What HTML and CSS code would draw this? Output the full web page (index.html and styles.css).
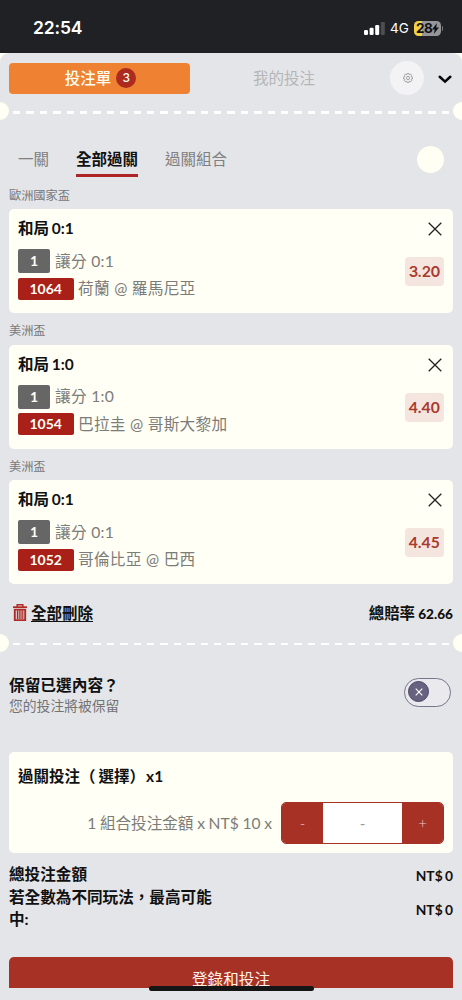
FILE: index.html
```
<!DOCTYPE html>
<html lang="zh-Hant">
<head>
<meta charset="utf-8">
<title>投注單</title>
<link rel="stylesheet" href="styles.css">
</head>
<body>
<div class="phone">
  <div class="status">
    <span class="clock">22:54</span>
    <svg class="signal" width="21" height="13" viewBox="0 0 21 13"><g fill="#fff"><rect x="0" y="8" width="4" height="5" rx="1.2"/><rect x="5.6" y="5.7" width="4" height="7.3" rx="1.2"/><rect x="11.2" y="3" width="4" height="10" rx="1.2"/></g><rect x="16.8" y="0" width="4" height="13" rx="1.2" fill="#4d4e51"/></svg>
    <span class="net">4G</span>
    <span class="battery"><span>28</span><svg width="7" height="11" viewBox="0 0 7 11"><path d="M5 0 0 6.4h2.7L1.8 11 7 4.4H4.2Z" fill="#111"/></svg></span>
    <i class="battery-tip"></i>
  </div>

  <div class="sheet">
    <div class="header">
      <div class="slip">投注單<span class="count">3</span></div>
      <div class="mine">我的投注</div>
      <div class="gear"><svg width="10" height="10" viewBox="0 0 24 24" fill="none" stroke="#98999b" stroke-width="2.2" stroke-linejoin="round"><path d="M9.8 1h4.4l.7 3.2 3-1.6 3 3-1.7 3 3.3 1.2v4.4l-3.3 1.2 1.7 3-3 3-3-1.6-.7 3.2H9.8l-.7-3.2-3 1.6-3-3 1.7-3-3.3-1.2V9.8l3.3-1.2-1.7-3 3-3 3 1.6Z"/><ellipse cx="12" cy="12" rx="3.4" ry="4.4"/></svg></div>
      <svg class="chevron" width="14" height="9" viewBox="0 0 14 9"><path d="m1.7 1.8 5.3 4.8 5.3-4.8" fill="none" stroke="#050505" stroke-width="2.5" stroke-linecap="round"/></svg>
    </div>
    <div class="tear"><i></i><div class="dashes"></div><i></i></div>

    <div class="tabs">
      <span class="tab">一關</span><span class="tab on">全部過關</span><span class="tab">過關組合</span><i class="dot"></i>
    </div>

    <div class="league">歐洲國家盃</div>
    <div class="card">
      <div class="pick">
        <div class="title">和局 0:1</div>
        <div class="row"><span class="tag">1</span><span>讓分 0:1</span></div>
        <div class="row match"><span class="tag red">1064</span><span>荷蘭 @ 羅馬尼亞</span></div>
      </div>
      <div class="side"><svg width="14" height="14" viewBox="0 0 14 14"><path d="m.7.7 12.6 12.6M13.3.7.7 13.3" stroke="#222" stroke-width="1.3"/></svg><span class="odds inter">3.20</span></div>
    </div>
    <div class="league">美洲盃</div>
    <div class="card">
      <div class="pick">
        <div class="title">和局 1:0</div>
        <div class="row"><span class="tag">1</span><span>讓分 1:0</span></div>
        <div class="row match"><span class="tag red">1054</span><span>巴拉圭 @ 哥斯大黎加</span></div>
      </div>
      <div class="side"><svg width="14" height="14" viewBox="0 0 14 14"><path d="m.7.7 12.6 12.6M13.3.7.7 13.3" stroke="#222" stroke-width="1.3"/></svg><span class="odds">4.40</span></div>
    </div>
    <div class="league">美洲盃</div>
    <div class="card">
      <div class="pick">
        <div class="title">和局 0:1</div>
        <div class="row"><span class="tag">1</span><span>讓分 0:1</span></div>
        <div class="row match"><span class="tag red">1052</span><span>哥倫比亞 @ 巴西</span></div>
      </div>
      <div class="side"><svg width="14" height="14" viewBox="0 0 14 14"><path d="m.7.7 12.6 12.6M13.3.7.7 13.3" stroke="#222" stroke-width="1.3"/></svg><span class="odds">4.45</span></div>
    </div>

    <div class="summary">
      <svg width="14" height="17" viewBox="0 0 14 17" fill="none" stroke="#b02a25"><path d="M0 3.2h14" stroke-width="1.8"/><path d="M4.2 3V.8h5.6V3" stroke-width="1.5"/><path d="M1.8 5v11.1h10.4V5" stroke-width="1.9"/><path d="M1.5 5.6h11" stroke-width="1.5"/><path d="M4.4 6v9M6.2 6v9M8 6v9M9.8 6v9" stroke-width="1.2"/></svg>
      <span class="clear">全部刪除</span>
      <span class="total-odds">總賠率 <b>62.66</b></span>
    </div>
    <div class="tear"><i></i><div class="dashes"></div><i></i></div>

    <div class="keep">
      <div>
        <div class="keep-title">保留已選內容？</div>
        <div class="keep-sub">您的投注將被保留</div>
      </div>
      <div class="toggle"><span class="knob"><svg width="8" height="8" viewBox="0 0 8 8"><path d="m.7.7 6.6 6.6M7.3.7.7 7.3" stroke="#fff" stroke-width="1.1"/></svg></span></div>
    </div>

    <div class="stake">
      <div class="stake-title">過關投注<span class="open">（</span>選擇<span class="close">）</span>x1</div>
      <div class="stake-row">
        <span class="formula">1 組合投注金額 x NT$ 10 x</span>
        <div class="stepper"><span class="step">-</span><span class="value">-</span><span class="step">+</span></div>
      </div>
    </div>

    <div class="totals">
      <div class="sum"><span>總投注金額</span><b>NT$ 0</b></div>
      <div class="sum"><span>若全數為不同玩法，最高可能<br>中:</span><b>NT$ 0</b></div>
    </div>
    <div class="submit">登錄和投注</div>
    <div class="home"></div>
  </div>
</div>
</body>
</html>
```

FILE: styles.css
```
* { box-sizing: border-box; }
body { margin: 0; background: #fffff5; font-family: Lato, "Noto Sans CJK TC", sans-serif; color: #111; }
.phone { width: 462px; height: 1000px; overflow: hidden; white-space: nowrap; }
i { display: block; }
svg { display: block; flex: none; }

.status { height: 53px; background: #202125; display: flex; align-items: center; padding: 3px 19px 0 33px; color: #fff; }
.clock { font: 600 17.5px/20px Inter, sans-serif; letter-spacing: -.15px; flex: 1; }
.net { font: 400 13.5px/18px Inter, sans-serif; margin-left: 5px; width: 19px; }
.battery { display: flex; align-items: center; gap: 0; margin-left: 4.5px; width: 27px; height: 15px; padding-left: 2.5px; border-radius: 4.5px; background: linear-gradient(90deg, #f3d246 28%, #96969a 28%); color: #111; font: 700 13.5px/15px Inter, sans-serif; letter-spacing: -.6px; }
.battery-tip { width: 1.5px; height: 5px; margin-left: 1px; border-radius: 0 2px 2px 0; background: #77787b; }

.sheet { height: 947px; background: #e4e5e8; border-radius: 9px 9px 0 0; padding: 0 9px; }
.header { height: 49px; padding-top: 1px; display: flex; align-items: center; }
.slip { width: 181px; height: 31px; border-radius: 4px; background: #ee8132; color: #fffdf0; font-size: 15.5px; line-height: 20px; font-weight: 500; display: flex; align-items: center; justify-content: center; gap: 5px; padding: 0 0 1px 2px; }
.count { width: 20px; height: 20px; margin-top: 1px; border-radius: 50%; background: #ad2a1e; font: 500 12px/20px Inter, sans-serif; text-align: center; }
.mine { width: 62px; margin-left: 63px; color: #b5b6b8; font-size: 15.5px; line-height: 22px; }
.gear { width: 34px; height: 34px; margin-left: 75px; border-radius: 50%; background: #f3f3f5; display: flex; align-items: center; justify-content: center; }
.gear svg { margin-left: 1px; }
.chevron { margin-left: 14px; margin-top: 2px; }

.tear { height: 18px; margin: 0 -9px; display: flex; align-items: center; justify-content: space-between; }
.tear i { width: 9px; height: 18px; background: #fffff3; border-radius: 0 9px 9px 0; flex: none; }
.tear i:last-child { border-radius: 9px 0 0 9px; }
.dashes { width: 436px; height: 2.5px; margin-top: 3px; background: repeating-linear-gradient(90deg, #fff 0 7.5px, transparent 7.5px 13.4px); }

.tabs { height: 65px; padding: 26px 9px 0; display: flex; align-items: flex-start; color: #808082; font-size: 15.5px; line-height: 26px; }
.tab { margin-right: 27px; height: 31px; }
.tab.on { color: #111; font-weight: 700; border-bottom: 3px solid #ad2525; }
.dot { width: 27px; height: 27px; border-radius: 50%; background: #fffff3; margin: 0 0 0 auto; }

.league { height: 31.5px; padding-top: 9px; color: #777779; font-size: 12.2px; line-height: 18px; }
.tabs + .league { height: 24px; padding-top: 2px; }
.card { height: 104px; background: #fffff5; border-radius: 5px; padding: 9px; display: flex; justify-content: space-between; }
.title { font-size: 15.5px; line-height: 21px; font-weight: 700; margin-bottom: 10px; word-spacing: -1px; }
.row { height: 24px; display: flex; align-items: center; gap: 5px; color: #7c7c79; font-size: 15.7px; line-height: 22px; }
.row > span:last-child { margin-top: -1px; letter-spacing: .25px; }
.row.match { margin-top: 4px; height: 23px; }
.match > span:last-child { margin-left: -.5px; }
.tag { width: 32px; height: 24px; border-radius: 2px; background: #666; color: #fffff5; font-size: 14px; line-height: 24px; font-weight: 700; text-align: center; }
.tag.red { width: 55.5px; height: 22px; line-height: 22px; background: #a82018; }
.side { display: flex; flex-direction: column; align-items: flex-end; padding-top: 4px; }
.side svg { margin: 0 2px 0 0; }
.odds { width: 39.5px; height: 29px; margin-top: 21px; border-radius: 4px; background: #f4e5df; color: #aa3a2c; text-align: center; font-size: 15.7px; line-height: 29px; font-weight: 700; }
.odds.inter { font-family: Inter, sans-serif; font-weight: 600; font-size: 15px; letter-spacing: -.5px; }

.summary { height: 49.5px; padding: 16px 0 0 4px; display: flex; align-items: flex-start; }
.summary svg { margin-top: 4px; }
.clear { margin-left: 4px; font-size: 15.5px; line-height: 26px; font-weight: 700; text-decoration: underline; text-decoration-thickness: 1px; text-underline-offset: 2px; }
.total-odds { margin-left: auto; font-size: 15.4px; line-height: 26px; font-weight: 700; word-spacing: -.5px; }
.total-odds b { font-size: 13.6px; }

.keep { height: 100.5px; display: flex; justify-content: space-between; align-items: flex-start; padding: 23px 2px 0 0; }
.keep-title { font-size: 15.7px; line-height: 21px; font-weight: 700; }
.keep-sub { font-size: 13.8px; line-height: 20px; color: #737375; }
.toggle { width: 47px; height: 29px; margin-top: 3px; border: 1.5px solid #77748d; border-radius: 15px; background: #eae9ee; padding: 2.5px 3px; }
.knob { width: 21px; height: 21px; border-radius: 50%; background: #66627f; border: 1px solid #49465f; display: flex; align-items: center; justify-content: center; }

.stake { height: 101px; background: #fffff5; border-radius: 5px; padding: 13px 9px 0; }
.stake-title { font-size: 15.5px; line-height: 22px; font-weight: 700; }
.open { margin-right: 3px; }
.close { margin-right: 1px; }
.stake-row { margin-top: 15px; display: flex; justify-content: flex-end; align-items: center; }
.formula { color: #7c7c78; font-size: 15.6px; line-height: 22px; margin: -1px 9px 0 0; word-spacing: -.3px; }
.stepper { width: 163px; height: 42px; border: 1px solid #a73125; border-radius: 5px; background: #fff; display: flex; overflow: hidden; }
.step { width: 41px; background: #a73125; color: #edc9c3; text-align: center; line-height: 40px; font-size: 15px; font-weight: 300; }
.value { flex: 1; color: #999; text-align: center; line-height: 40px; font-size: 15px; }

.totals { height: 104px; padding-top: 10px; }
.sum { display: flex; align-items: center; justify-content: space-between; font-size: 15.6px; line-height: 22.5px; }
.sum span { font-weight: 700; }
.sum b { font-size: 13.8px; line-height: 19px; margin-top: 3px; word-spacing: -1px; }
.submit { height: 31px; background: #a73125; color: #fff1e9; border-radius: 5px 5px 0 0; text-align: center; font-size: 15.6px; line-height: 44px; overflow: hidden; }
.home { position: relative; width: 165px; height: 5px; margin: -2px auto 0; border-radius: 3px; background: #151515; }
```
